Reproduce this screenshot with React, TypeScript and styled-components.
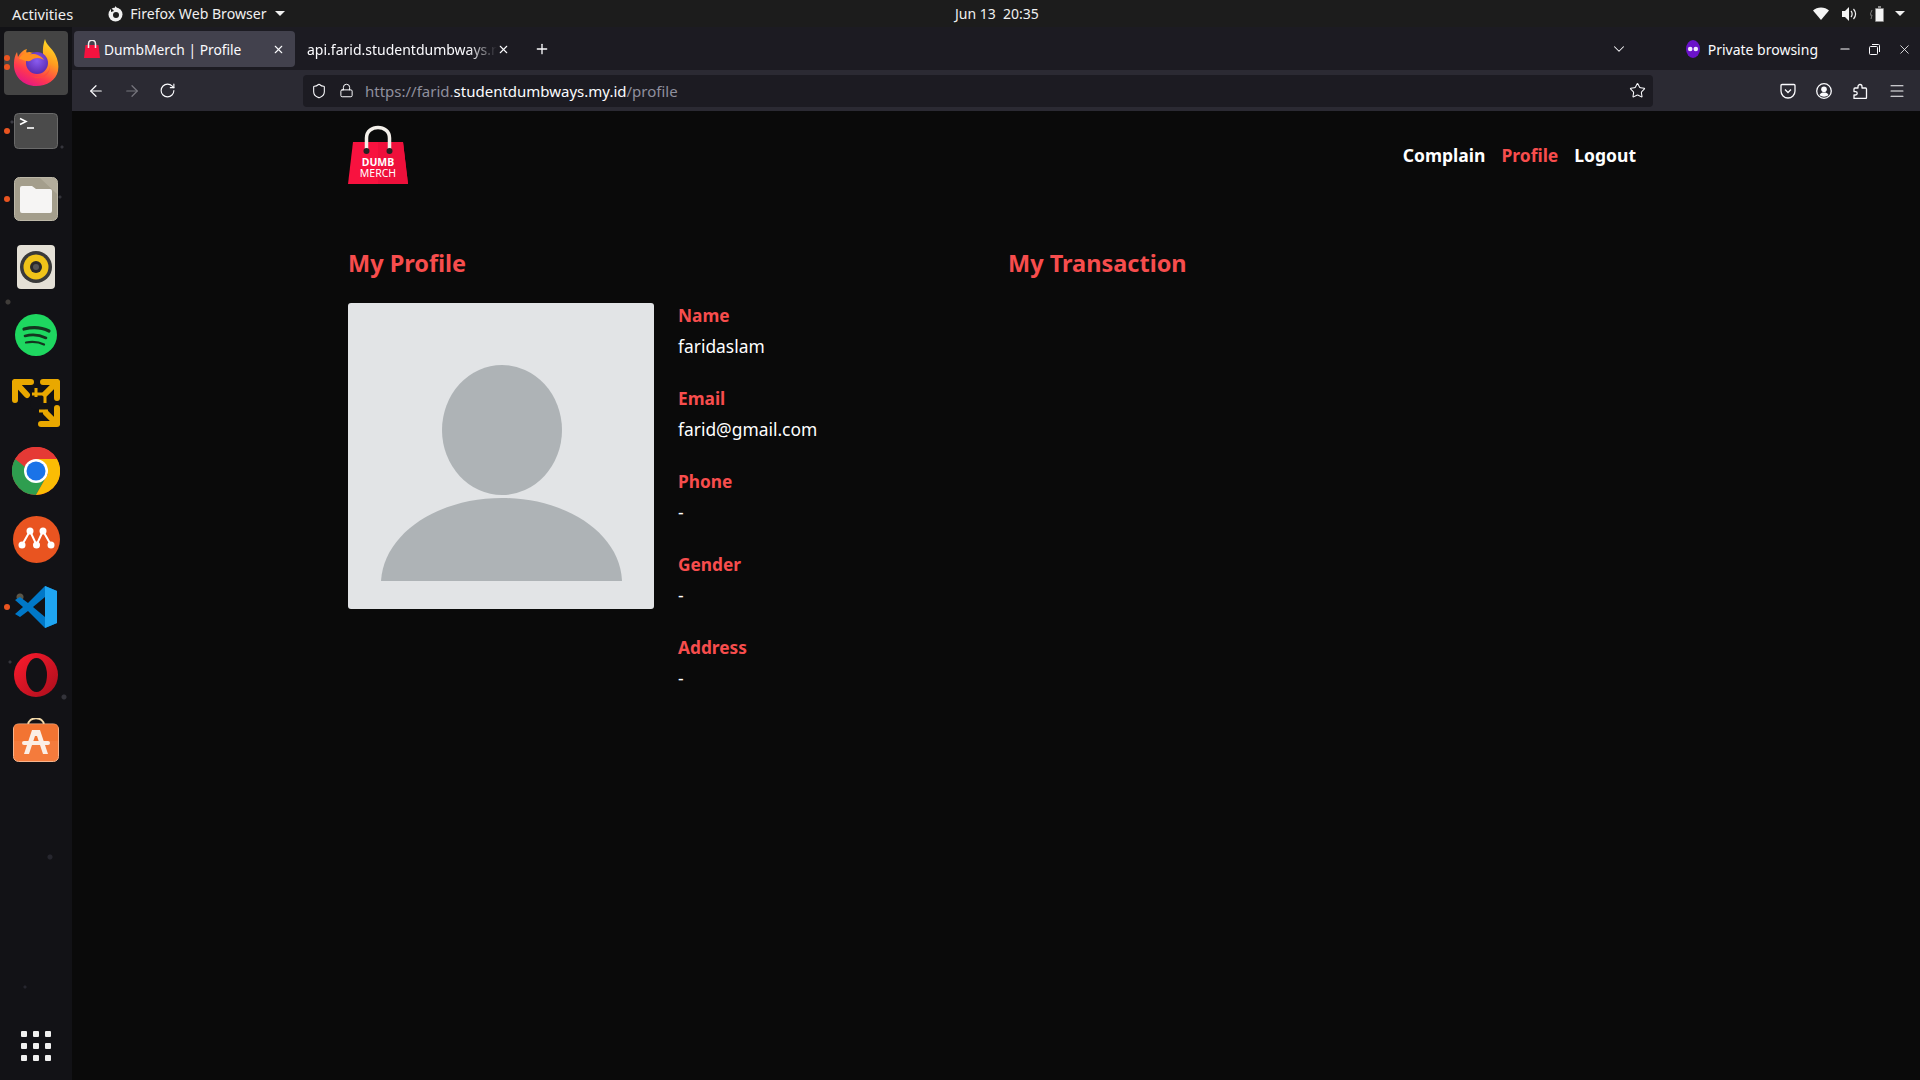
import React from "react";
import styled, { createGlobalStyle } from "styled-components";
import { ArrowLeft, ArrowRight, RotateCw, Shield, Lock, Star, Menu, X, Plus, ChevronDown, Minus } from "lucide-react";

const Global = createGlobalStyle`
html, body { margin: 0; padding: 0; background: #0a0a0a; }
* { box-sizing: border-box; }
body { font-family: "Noto Sans", "Open Sans", sans-serif; overflow: hidden; }
`;

const Screen = styled.div`
width: 1920px;
height: 1080px;
display: flex;
flex-direction: column;
overflow: hidden;
background: #0a0a0a;
`;

const TopBar = styled.div`
height: 27px;
flex: none;
background: #1c1c1c;
color: #f0f0f0;
font-size: 14px;
display: grid;
grid-template-columns: 955px auto 1fr;
align-items: center;
`;
const TopLeft = styled.div`
display: flex;
align-items: center;
padding-left: 12px;
`;
const Activities = styled.span`
font-size: 14.7px;
`;
const AppName = styled.div`
display: flex;
align-items: center;
margin-left: 35px;
gap: 7px;
font-size: 14.1px;
`;
const Caret = styled.span`
width: 0;
height: 0;
border-left: 5px solid transparent;
border-right: 5px solid transparent;
border-top: 5px solid #f0f0f0;
margin-left: 1px;
`;
const TrayCaret = styled(Caret)`
margin-left: -3px;
`;
const TopRight = styled.div`
display: flex;
align-items: center;
justify-content: flex-end;
gap: 13px;
padding-right: 15px;
`;

const Body = styled.div`
flex: 1;
display: flex;
min-height: 0;
`;

const Dock = styled.div`
width: 72px;
flex: none;
padding-top: 2px;
display: flex;
flex-direction: column;
background-color: #121216;
background-image:
  radial-gradient(circle at 12px 95px, #3a3a42 1px, transparent 2px),
  radial-gradient(circle at 60px 170px, #33333a 1px, transparent 2px),
  radial-gradient(circle at 30px 227px, #4a4640 1px, transparent 2px),
  radial-gradient(circle at 8px 275px, #403d3a 2px, transparent 3px),
  radial-gradient(circle at 62px 120px, #35353c 1px, transparent 2px),
  radial-gradient(circle at 20px 570px, #5a5648 3px, transparent 4px),
  radial-gradient(circle at 64px 670px, #33333a 2px, transparent 3px),
  radial-gradient(circle at 10px 635px, #35353c 1px, transparent 2px),
  radial-gradient(circle at 50px 830px, #26262e 2px, transparent 3px),
  radial-gradient(circle at 25px 960px, #26262e 1px, transparent 2px);
`;
const Slot = styled.div`
height: 68px;
flex: none;
position: relative;
display: flex;
align-items: center;
justify-content: center;
`;
const ActiveBox = styled.div`
width: 64px;
height: 64px;
border-radius: 4px;
background: #444444;
display: flex;
align-items: center;
justify-content: center;
`;
const RunDot = styled.span<{ $top: number }>`
position: absolute;
left: 4px;
top: ${(p) => p.$top}px;
width: 6px;
height: 6px;
border-radius: 50%;
background: #e95420;
`;
const AppGrid = styled.div`
margin-top: auto;
margin-bottom: 19px;
margin-left: 21px;
width: 30px;
display: grid;
grid-template-columns: repeat(3, 6px);
grid-auto-rows: 6px;
gap: 6px;
`;
const GridDot = styled.span`
background: #f0f0f0;
border-radius: 1px;
`;

const Browser = styled.div`
flex: 1;
display: flex;
flex-direction: column;
min-width: 0;
`;
const TabStrip = styled.div`
height: 43px;
flex: none;
background: #1c1b22;
display: flex;
align-items: center;
padding: 4px 0 3px 2px;
color: #fbfbfe;
font-size: 14px;
`;
const ActiveTab = styled.div`
width: 221px;
height: 36px;
background: #42414d;
border-radius: 4px;
display: flex;
align-items: center;
padding-left: 10px;
font-size: 13.8px;
`;
const TabTitle = styled.span`
margin-left: 4px;
flex: 1;
`;
const OtherTab = styled.div`
width: 221px;
height: 36px;
display: flex;
align-items: center;
padding-left: 12px;
`;
const FadedTitle = styled.span`
width: 190px;
white-space: nowrap;
overflow: hidden;
-webkit-mask-image: linear-gradient(to right, #000 85%, transparent);
mask-image: linear-gradient(to right, #000 85%, transparent);
`;
const TabClose = styled.span`
display: flex;
margin-right: 10px;
`;
const NewTab = styled.span`
display: flex;
margin-left: 18px;
`;
const TabEnd = styled.div`
margin-left: auto;
display: flex;
align-items: center;
`;
const Private = styled.div`
display: flex;
align-items: center;
margin-left: 58px;
gap: 8px;
font-size: 14px;
`;
const WinButtons = styled.div`
display: flex;
align-items: center;
gap: 17px;
margin-left: 20px;
padding-right: 8px;
`;
const NavBar = styled.div`
height: 41px;
flex: none;
background: #2b2a33;
display: flex;
align-items: center;
padding-left: 15px;
color: #fbfbfe;
`;
const NavIcons = styled.div`
display: flex;
align-items: center;
gap: 18px;
width: 216px;
`;
const UrlBar = styled.div`
width: 1350px;
height: 32px;
background: #1c1b22;
border-radius: 4px;
display: flex;
align-items: center;
padding: 0 7px 0 8px;
font-size: 15px;
`;
const UrlLock = styled.span`
display: flex;
margin-left: 12px;
`;
const UrlText = styled.div`
margin-left: 11px;
flex: 1;
color: #8f8f9d;
`;
const UrlHost = styled.span`
color: #fbfbfe;
`;
const Tools = styled.div`
display: flex;
align-items: center;
margin-left: 127px;
gap: 20px;
`;

const Page = styled.div`
flex: 1;
background: #0a0a0a;
`;
const Container = styled.div`
width: 1320px;
margin: 0 auto;
padding: 0 12px;
`;
const Header = styled.div`
height: 136px;
padding-top: 14px;
display: flex;
justify-content: space-between;
align-items: flex-start;
`;
const NavLinks = styled.div`
display: flex;
gap: 16px;
padding: 16px 8px 0 0;
`;
const NavLink = styled.a<{ $active?: boolean }>`
font-size: 17.5px;
font-weight: 700;
line-height: 28px;
color: ${(p) => (p.$active ? "#f74d4d" : "#ffffff")};
`;
const Columns = styled.div`
display: grid;
grid-template-columns: 660px 1fr;
`;
const Title = styled.h2`
margin: 0 0 24px;
font-size: 23.5px;
line-height: 32px;
font-weight: 700;
color: #f74d4d;
`;
const ProfileRow = styled.div`
display: flex;
gap: 24px;
`;
const Avatar = styled.div`
width: 306px;
height: 306px;
border-radius: 3px;
background: #e2e4e6;
overflow: hidden;
flex: none;
`;
const AvatarSvg = styled.svg`
display: block;
`;
const Info = styled.div`
display: flex;
flex-direction: column;
`;
const Field = styled.div`
height: 83px;
`;
const FieldLabel = styled.div`
font-size: 17.3px;
line-height: 24px;
font-weight: 700;
color: #f74d4d;
margin: 1px 0 6px;
`;
const FieldValue = styled.div`
font-size: 17.4px;
line-height: 24px;
color: #ffffff;
`;

const Firefox = () => (
  <svg width="46" height="48" viewBox="0 0 46 48">
    <defs>
      <linearGradient id="ff1" x1="0.8" y1="0" x2="0.3" y2="1">
        <stop offset="0" stopColor="#ffe226" />
        <stop offset="0.4" stopColor="#ff9a1f" />
        <stop offset="0.75" stopColor="#ff3750" />
        <stop offset="1" stopColor="#e31587" />
      </linearGradient>
      <radialGradient id="ff2" cx="0.5" cy="0.4" r="0.6">
        <stop offset="0" stopColor="#8a5cf0" />
        <stop offset="1" stopColor="#5b2bb0" />
      </radialGradient>
    </defs>
    <path d="M32 0c1 6 7 9 10 15 3 6 4 11 3 17-2 9-11 15-22 15C10 47 0 37 1 24c0-4 1-8 3-11l1 5c2-4 5-7 9-8-1 2-1 3 0 4 3-1 8-1 12 2 3 2 4 3 5 3-2-6-1-13 1-19z" fill="url(#ff1)" />
    <circle cx="24" cy="24" r="11" fill="url(#ff2)" />
    <path d="M6 20c3-6 8-7 12-7l-3 3c4-2 12-1 16 5-3-2-7-3-11-1-2 1-3 3-6 2-3 0-5-2-8-2z" fill="#ff8f1f" />
    <path d="M14 32c2 5 9 7 15 5 5-2 8-6 8-11 0 0 1 8-6 12-6 3-13 1-17-6z" fill="#ff4a3a" opacity="0.7" />
  </svg>
);

const Terminal = () => (
  <svg width="44" height="36" viewBox="0 0 44 36">
    <rect x="0.5" y="0.5" width="43" height="35" rx="4" fill="#4b4b4b" stroke="#6a6a6a" />
    <path d="M6 5.500l6 3-6 3" stroke="#fff" strokeWidth="1.6" fill="none" />
    <path d="M13 15h7" stroke="#fff" strokeWidth="1.6" />
  </svg>
);

const Files = () => (
  <svg width="44" height="44" viewBox="0 0 44 44">
    <rect x="0.5" y="0.5" width="43" height="43" rx="5" fill="#a49e8c" stroke="#bdb8a8" />
    <path d="M26 1h13a4 4 0 0 1 4 4v12z" fill="#b3ad9c" />
    <path d="M6 11a2 2 0 0 1 2-2h10l4 3h14a2 2 0 0 1 2 2v20a2 2 0 0 1-2 2H8a2 2 0 0 1-2-2z" fill="#f6f5f4" />
  </svg>
);

const Speaker = () => (
  <svg width="38" height="44" viewBox="0 0 38 44">
    <rect width="38" height="44" rx="4" fill="#e4e0d6" />
    <circle cx="19" cy="22" r="16" fill="#3a3a3a" />
    <circle cx="19" cy="22" r="12.5" fill="#f0c419" />
    <circle cx="19" cy="22" r="6" fill="#2a2a2a" />
    <circle cx="19" cy="22" r="3" fill="#555" />
  </svg>
);

const Spotify = () => (
  <svg width="42" height="42" viewBox="0 0 42 42">
    <circle cx="21" cy="21" r="21" fill="#1ed760" />
    <g fill="none" stroke="#14351f" strokeLinecap="round">
      <path d="M9 15c8-2 17-2 25 2" strokeWidth="3.2" />
      <path d="M10 22c7-2 15-1 21 2" strokeWidth="2.6" />
      <path d="M11 28.500c6-1 12-1 18 2" strokeWidth="2.2" />
    </g>
  </svg>
);

const VMware = () => (
  <svg width="48" height="48" viewBox="0 0 48 48">
    <g fill="none" stroke="#e9a800" strokeWidth="6" strokeLinecap="round" strokeLinejoin="round">
      <path d="M19 3H3V21M3 3L15 16" />
      <path d="M31 3H45V19M45 3L33 15" />
      <path d="M29 45H45V29M45 45L34 34" />
    </g>
    <g fill="none" stroke="#e9a800" strokeWidth="3">
      <path d="M20 15H33V24" />
      <path d="M24 9V18" />
      <path d="M27 32H36" />
    </g>
    <circle cx="24" cy="25" r="6" fill="#121216" />
  </svg>
);

const Chrome = () => (
  <svg width="48" height="48" viewBox="0 0 48 48">
    <circle cx="24" cy="24" r="24" fill="#e53935" />
    <path d="M24 24 L3.200 12 A24 24 0 0 0 24 48 L36 27z" fill="#2e9e4f" />
    <path d="M24 12 H45 A24 24 0 0 1 24 48 L36 27z" fill="#fbbc04" />
    <path d="M3.200 12 A24 24 0 0 1 45 12 H24 A12 12 0 0 0 13 20z" fill="#e53935" />
    <circle cx="24" cy="24" r="12" fill="#fff" />
    <circle cx="24" cy="24" r="9.500" fill="#1a73e8" />
  </svg>
);

const Mailspring = () => (
  <svg width="47" height="47" viewBox="0 0 47 47">
    <circle cx="23.500" cy="23.500" r="23.500" fill="#e95420" />
    <path d="M9 29L17 15L23.500 29L30 15L38 29" fill="none" stroke="#fff" strokeWidth="2" />
    <g fill="#fff">
      <circle cx="9" cy="29" r="3.500" />
      <circle cx="17" cy="15" r="3.500" />
      <circle cx="23.500" cy="29" r="3.500" />
      <circle cx="30" cy="15" r="3.500" />
      <circle cx="38" cy="29" r="3.500" />
    </g>
  </svg>
);

const VSCode = () => (
  <svg width="42" height="42" viewBox="0 0 42 42">
    <path d="M30 0L42 5v32l-12 5L13 25l-8 6-5-3 8-7-8-7 5-3 8 6z" fill="#0078c8" />
    <path d="M30 0L42 5v32l-12 5z" fill="#1fa5f2" />
    <path d="M30 11v20l-12-10z" fill="#121216" />
  </svg>
);

const Opera = () => (
  <svg width="44" height="44" viewBox="0 0 44 44">
    <defs>
      <linearGradient id="op" x1="0" y1="0" x2="1" y2="1">
        <stop offset="0" stopColor="#ff1b2d" />
        <stop offset="1" stopColor="#a80e1c" />
      </linearGradient>
    </defs>
    <ellipse cx="22" cy="22" rx="22" ry="22" fill="url(#op)" />
    <ellipse cx="22.500" cy="22" rx="10.500" ry="17" fill="#121216" />
  </svg>
);

const AppStore = () => (
  <svg width="46" height="50" viewBox="0 0 46 50">
    <path d="M15 7c0-9 16-9 16 0" fill="none" stroke="#f3d9a8" strokeWidth="1.800" />
    <rect x="0.500" y="6" width="45" height="37.500" rx="5" fill="#f47b3c" stroke="#f8b48c" />
    <path d="M1 8a3 3 0 0 1 3-2h38a3 3 0 0 1 3 2v15H1z" fill="#f0702c" opacity="0.6" />
    <path d="M19 12h8l8 24h-5l-6-18h-2l-6 18h-5z" fill="#fbeee6" />
    <rect x="9" y="23" width="28" height="4" rx="2" fill="#fbeee6" />
  </svg>
);

const LogoBag = () => (
  <svg width="60" height="60" viewBox="0 0 60 60">
    <path d="M5 17H55L60 59H0z" fill="#f8123f" />
    <path d="M30 17H55L60 59H30z" fill="#ee103b" />
    <path d="M18.500 26V13C18.500 -1 41.500 -1 41.500 13V26" fill="none" stroke="#f4f0ea" strokeWidth="3.500" />
    <circle cx="18.500" cy="26" r="3" fill="#222" />
    <circle cx="41.500" cy="26" r="3" fill="#222" />
    <text x="30" y="41" textAnchor="middle" fontSize="10.500" fontWeight="700" fill="#fff" fontFamily="Noto Sans">DUMB</text>
    <text x="30" y="52" textAnchor="middle" fontSize="10.500" fill="#fff" fontFamily="Noto Sans">MERCH</text>
  </svg>
);

const FavBag = () => (
  <svg width="16" height="18" viewBox="0 0 16 18">
    <path d="M1.500 5H14.500L16 18H0z" fill="#f5123f" />
    <path d="M4.500 8V4C4.500 -1 11.500 -1 11.500 4V8" fill="none" stroke="#eee" strokeWidth="1.500" />
  </svg>
);

const FirefoxMono = () => (
  <svg width="15" height="16" viewBox="0 0 15 16">
    <circle cx="7.500" cy="8.500" r="7" fill="#f0f0f0" />
    <circle cx="8" cy="9" r="3" fill="#1c1c1c" />
    <path d="M3 2.500A7 7 0 0 1 6 5L3 6z" fill="#1c1c1c" />
    <path d="M7 0l3 3-3 2z" fill="#f0f0f0" />
  </svg>
);

const Wifi = () => (
  <svg width="16" height="13" viewBox="0 0 16 13"><path d="M0 3.500C4-.5 12-.5 16 3.500L8 13z" fill="#f4f4f4" /></svg>
);
const Volume = () => (
  <svg width="15" height="14" viewBox="0 0 15 14" fill="none">
    <path d="M0 4h3l4-4v14l-4-4H0z" fill="#f4f4f4" />
    <path d="M9 4c1.500 1.500 1.500 4.500 0 6M11.500 2c2.500 3 2.500 7 0 10" stroke="#f4f4f4" strokeWidth="1.200" />
  </svg>
);
const Battery = () => (
  <svg width="15" height="16" viewBox="0 0 15 16">
    <path d="M2 4L0 9h2l-1 4" fill="none" stroke="#777" />
    <path d="M6 2h2V0h3v2h2a1 1 0 0 1 1 1v12a1 1 0 0 1-1 1H6a1 1 0 0 1-1-1V3a1 1 0 0 1 1-1z" fill="#8a8a8a" />
    <rect x="6" y="3" width="7" height="12" fill="#f4f4f4" />
  </svg>
);
const PrivateMask = () => (
  <svg width="14" height="18" viewBox="0 0 14 18">
    <ellipse cx="7" cy="9" rx="7" ry="9" fill="#6a12c9" />
    <circle cx="4.200" cy="9" r="2.300" fill="#f0e8ff" />
    <circle cx="9.800" cy="9" r="2.300" fill="#f0e8ff" />
  </svg>
);
const Pocket = () => (
  <svg width="16" height="16" viewBox="0 0 16 16" fill="none" stroke="#fbfbfe" strokeWidth="1.300">
    <path d="M2 1.500h12a1 1 0 0 1 1 1V8a7 7 0 0 1-14 0V2.500a1 1 0 0 1 1-1z" />
    <path d="M5 6.500l3 3 3-3" />
  </svg>
);
const Account = () => (
  <svg width="16" height="16" viewBox="0 0 16 16">
    <circle cx="8" cy="8" r="7.300" fill="none" stroke="#fbfbfe" strokeWidth="1.300" />
    <circle cx="8" cy="6.300" r="2.800" fill="#fbfbfe" />
    <path d="M3.500 12c1-2 2.500-2.500 4.500-2.500s3.500.5 4.500 2.500c-2.500 2.200-6.500 2.200-9 0z" fill="#fbfbfe" />
  </svg>
);
const Extension = () => (
  <svg width="16" height="16" viewBox="0 0 16 16" fill="none" stroke="#fbfbfe" strokeWidth="1.300" strokeLinejoin="round">
    <path d="M3 5H6V3.500a2 2 0 0 1 4 0V5h3.500a1 1 0 0 1 1 1v8.500a1 1 0 0 1-1 1H2V12h1.500a1.700 1.700 0 0 0 0-3.400H2V6a1 1 0 0 1 1-1z" />
  </svg>
);
const Restore = () => (
  <svg width="11" height="11" viewBox="0 0 11 11" fill="none" stroke="#fbfbfe">
    <rect x="0.500" y="2.500" width="8" height="8" rx="1" />
    <path d="M3 .5h6.500a1 1 0 0 1 1 1V8" />
  </svg>
);

const fields = [
  { label: "Name", value: "faridaslam" },
  { label: "Email", value: "farid@gmail.com" },
  { label: "Phone", value: "-" },
  { label: "Gender", value: "-" },
  { label: "Address", value: "-" },
];

const App: React.FC = () => {
  return (
    <Screen>
      <Global />
      <TopBar>
        <TopLeft>
          <Activities>Activities</Activities>
          <AppName>
            <FirefoxMono />
            Firefox Web Browser
            <Caret />
          </AppName>
        </TopLeft>
        <div>Jun 13&nbsp; 20:35</div>
        <TopRight>
          <Wifi />
          <Volume />
          <Battery />
          <TrayCaret />
        </TopRight>
      </TopBar>
      <Body>
        <Dock>
          <Slot>
            <RunDot $top={26} />
            <RunDot $top={35} />
            <ActiveBox><Firefox /></ActiveBox>
          </Slot>
          <Slot><RunDot $top={31} /><Terminal /></Slot>
          <Slot><RunDot $top={31} /><Files /></Slot>
          <Slot><Speaker /></Slot>
          <Slot><Spotify /></Slot>
          <Slot><VMware /></Slot>
          <Slot><Chrome /></Slot>
          <Slot><Mailspring /></Slot>
          <Slot><RunDot $top={31} /><VSCode /></Slot>
          <Slot><Opera /></Slot>
          <Slot><AppStore /></Slot>
          <AppGrid>
            {Array.from({ length: 9 }).map((_, i) => <GridDot key={i} />)}
          </AppGrid>
        </Dock>
        <Browser>
          <TabStrip>
            <ActiveTab>
              <FavBag />
              <TabTitle>DumbMerch | Profile</TabTitle>
              <TabClose><X size={13} /></TabClose>
            </ActiveTab>
            <OtherTab>
              <FadedTitle>api.farid.studentdumbways.my.id</FadedTitle>
              <X size={13} />
            </OtherTab>
            <NewTab><Plus size={16} /></NewTab>
            <TabEnd>
              <ChevronDown size={18} strokeWidth={1.4} />
              <Private>
                <PrivateMask />
                Private browsing
              </Private>
              <WinButtons>
                <Minus size={14} />
                <Restore />
                <X size={15} strokeWidth={1.3} />
              </WinButtons>
            </TabEnd>
          </TabStrip>
          <NavBar>
            <NavIcons>
              <ArrowLeft size={18} strokeWidth={1.6} />
              <ArrowRight size={18} strokeWidth={1.6} color="#77767e" />
              <RotateCw size={17} strokeWidth={1.6} />
            </NavIcons>
            <UrlBar>
              <Shield size={16} strokeWidth={1.6} />
              <UrlLock><Lock size={15} strokeWidth={1.6} /></UrlLock>
              <UrlText>
                https://farid.<UrlHost>studentdumbways.my.id</UrlHost>/profile
              </UrlText>
              <Star size={17} strokeWidth={1.5} />
            </UrlBar>
            <Tools>
              <Pocket />
              <Account />
              <Extension />
              <Menu size={18} strokeWidth={1.4} />
            </Tools>
          </NavBar>
          <Page>
            <Container>
              <Header>
                <LogoBag />
                <NavLinks>
                  <NavLink>Complain</NavLink>
                  <NavLink $active>Profile</NavLink>
                  <NavLink>Logout</NavLink>
                </NavLinks>
              </Header>
              <Columns>
                <div>
                  <Title>My Profile</Title>
                  <ProfileRow>
                    <Avatar>
                      <AvatarSvg width="306" height="306" viewBox="0 0 306 306">
                        <ellipse cx="154" cy="127" rx="60" ry="65" fill="#aeb3b6" />
                        <path d="M33 278C36 230 90 195 154 195C218 195 272 230 274 278z" fill="#aeb3b6" />
                      </AvatarSvg>
                    </Avatar>
                    <Info>
                      {fields.map((f) => (
                        <Field key={f.label}>
                          <FieldLabel>{f.label}</FieldLabel>
                          <FieldValue>{f.value}</FieldValue>
                        </Field>
                      ))}
                    </Info>
                  </ProfileRow>
                </div>
                <div>
                  <Title>My Transaction</Title>
                </div>
              </Columns>
            </Container>
          </Page>
        </Browser>
      </Body>
    </Screen>
  );
};

export default App;
